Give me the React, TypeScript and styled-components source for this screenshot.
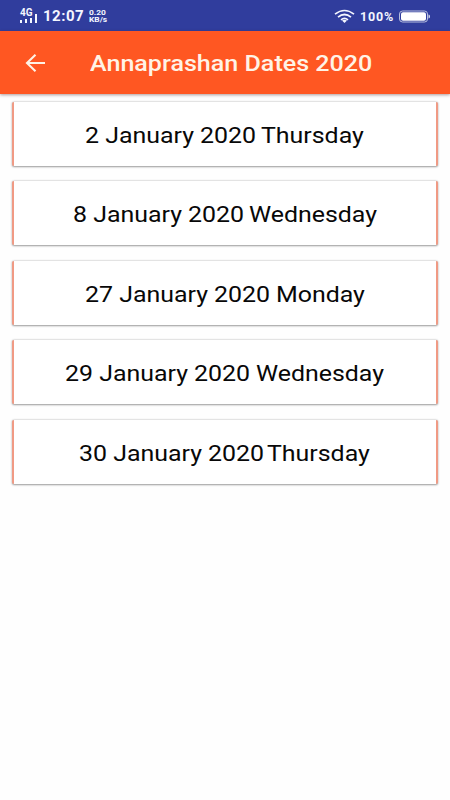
import React from "react";
import styled, { createGlobalStyle } from "styled-components";

const GlobalStyle = createGlobalStyle`
  * { box-sizing: border-box; }
  body { margin: 0; background: #fefefe; font-family: Roboto, "Liberation Sans", sans-serif; }
`;

const Screen = styled.div`
  width: 450px;
  height: 800px;
  overflow: hidden;
  background: #fefefe;
`;

const StatusBar = styled.header`
  display: flex;
  align-items: center;
  height: 31px;
  padding: 1px 19px 0 20px;
  background: #303d9d;
  color: #f4f6ff;
`;

const Signal = styled.div`
  display: flex;
  flex-direction: column;
  width: 19px;
  height: 15px;
  margin: -2px 4px 0 0;
`;

const Network = styled.span`
  font-size: 10px;
  font-weight: 700;
  line-height: 9px;
`;

const Bars = styled.svg`
  display: block;
  width: 19px;
  height: 9px;
  margin-top: -3px;
`;

const Clock = styled.span`
  font-size: 15px;
  font-weight: 700;
  line-height: 18px;
  letter-spacing: 0.5px;
  width: 46px;
`;

const Speed = styled.div`
  display: flex;
  flex-direction: column;
  font-size: 7.5px;
  font-weight: 700;
  line-height: 7.5px;
  transform: scaleX(1.12);
  transform-origin: left;
`;

const Status = styled.div`
  display: flex;
  align-items: center;
  margin-left: auto;
`;

const WifiIcon = styled.svg`
  width: 21px;
  height: 15px;
  margin-right: 5px;
`;

const Percent = styled.span`
  width: 39px;
  font-size: 12.5px;
  font-weight: 700;
  letter-spacing: 0.8px;
`;

const BatteryIcon = styled.svg`
  width: 32px;
  height: 13px;
`;

const AppBar = styled.nav`
  position: relative;
  display: flex;
  align-items: center;
  height: 63px;
  padding-left: 25px;
  background: #ff5722;
  box-shadow: 0 1px 3px rgba(70, 30, 30, 0.45);
`;

const BackIcon = styled.svg`
  width: 21px;
  height: 20px;
  margin-right: 44px;
`;

const Title = styled.h1`
  margin: 1px 0 0;
  color: #fff3e6;
  font-size: 22.5px;
  font-weight: 500;
  line-height: 28px;
  white-space: nowrap;
  transform: scaleX(1.115);
  transform-origin: left;
`;

const List = styled.main`
  display: flex;
  flex-direction: column;
  gap: 15.5px;
  padding: 7.75px 12px;
`;

const Card = styled.article<{ $start: number }>`
  display: flex;
  align-items: center;
  height: 64px;
  padding-top: 2px;
  padding-left: ${(p) => p.$start - 14}px;
  border: solid #f09a84;
  border-width: 0 2px;
  border-radius: 2px;
  background: #fff;
  box-shadow: 0 0.5px 2px rgba(0, 0, 0, 0.4);
`;

const DateText = styled.span<{ $width: number }>`
  flex: none;
  width: ${(p) => p.$width}px;
  color: #080808;
  font-size: 22.5px;
  line-height: 28px;
  white-space: nowrap;
  transform: scaleX(1.107);
  transform-origin: left;
`;

const dates = [
  { date: "2 January 2020", day: "Thursday", start: 85, offset: 176 },
  { date: "8 January 2020", day: "Wednesday", start: 73, offset: 175.5 },
  { date: "27 January 2020", day: "Monday", start: 84.5, offset: 191 },
  { date: "29 January 2020", day: "Wednesday", start: 65, offset: 191 },
  { date: "30 January 2020", day: "Thursday", start: 79, offset: 188 },
];

export default function App() {
  return (
    <Screen>
      <GlobalStyle />
      <StatusBar>
        <Signal>
          <Network>4G</Network>
          <Bars viewBox="0 0 19 9" fill="currentColor">
            <path d="M0 6h2v3H0zM5 5h2v4H5zM10 4h2v5h-2zM15 0h2v9h-2z" />
          </Bars>
        </Signal>
        <Clock>12:07</Clock>
        <Speed>
          <span>0.20</span>
          <span>KB/s</span>
        </Speed>
        <Status>
          <WifiIcon viewBox="0 0 21 15" fill="none" stroke="currentColor" strokeWidth="1.7">
            <path d="M1 5.2Q10.5-2.2 20 5.2M4 8.2Q10.5 2.8 17 8.2M7 10.8Q10.5 8 14 10.8" />
            <path d="M8 11.5Q10.5 10 13 11.5L10.5 14z" fill="currentColor" stroke="none" />
          </WifiIcon>
          <Percent>100%</Percent>
          <BatteryIcon viewBox="0 0 32 13">
            <rect x="0.5" y="1" width="28" height="11" rx="3" fill="none" stroke="#b8bfdf" />
            <rect x="2" y="2.3" width="25" height="8.4" rx="2" fill="#fff" />
            <path d="M29.5 4.5q1.5 0 1.5 2t-1.5 2z" fill="#d5daf0" />
          </BatteryIcon>
        </Status>
      </StatusBar>
      <AppBar>
        <BackIcon viewBox="0 0 21 20" fill="none" stroke="#fff3e6" strokeWidth="2.1">
          <path d="M20 10H2M10.5 1.8L2 10L10.5 18.2" />
        </BackIcon>
        <Title>Annaprashan Dates 2020</Title>
      </AppBar>
      <List>
        {dates.map((d) => (
          <Card key={d.date} $start={d.start}>
            <DateText $width={d.offset}>{d.date}</DateText>
            <DateText $width={130}>{d.day}</DateText>
          </Card>
        ))}
      </List>
    </Screen>
  );
}
